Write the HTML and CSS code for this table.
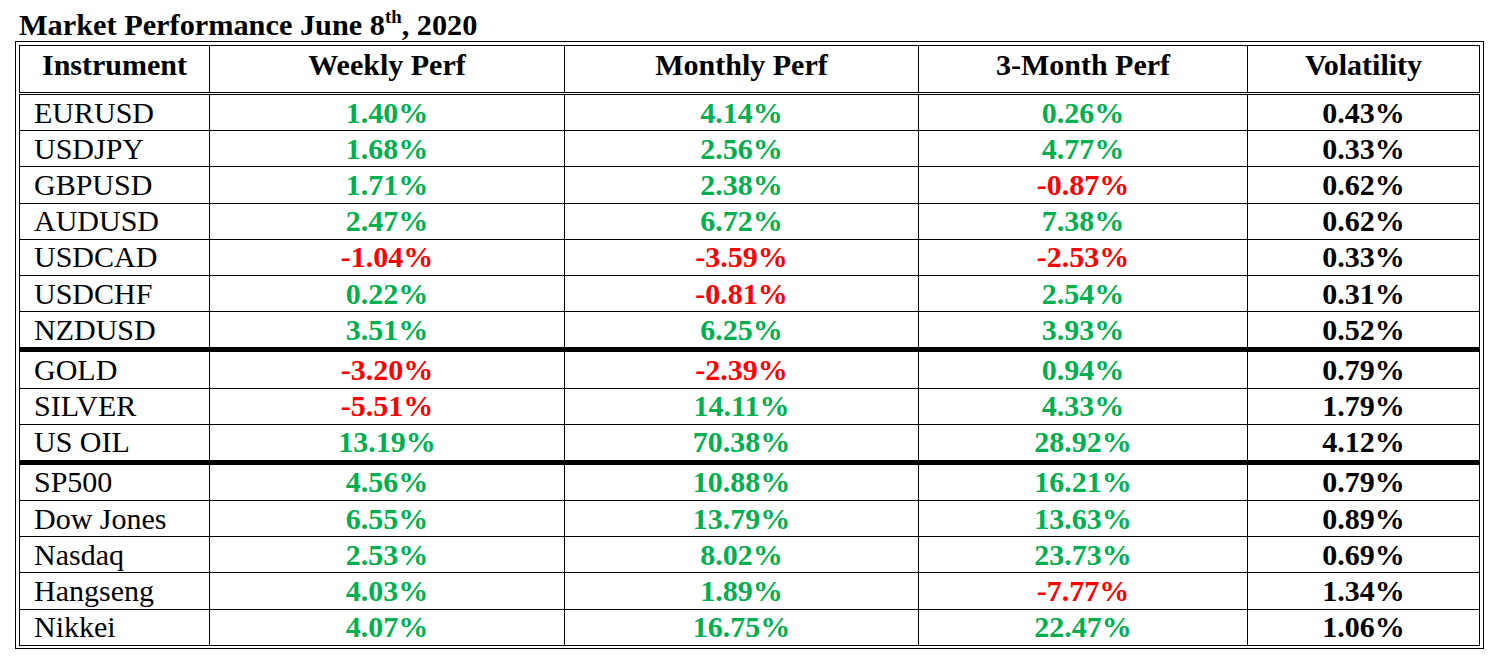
FILE: index.html
```html
<!DOCTYPE html>
<html>
<head>
<meta charset="utf-8">
<link rel="stylesheet" href="styles.css">
</head>
<body>
<h1 class="title">Market Performance June 8<sup class="ord">th</sup>, 2020</h1>
<div class="frame">
<table class="perf">
<colgroup>
<col class="c1"><col class="c2"><col class="c3"><col class="c4"><col class="c5">
</colgroup>
<thead>
<tr><th>Instrument</th><th>Weekly Perf</th><th>Monthly Perf</th><th>3-Month Perf</th><th>Volatility</th></tr>
</thead>
<tbody>
<tr><td class="name">EURUSD</td><td class="up">1.40%</td><td class="up">4.14%</td><td class="up">0.26%</td><td class="vol">0.43%</td></tr>
<tr><td class="name">USDJPY</td><td class="up">1.68%</td><td class="up">2.56%</td><td class="up">4.77%</td><td class="vol">0.33%</td></tr>
<tr><td class="name">GBPUSD</td><td class="up">1.71%</td><td class="up">2.38%</td><td class="down">-0.87%</td><td class="vol">0.62%</td></tr>
<tr><td class="name">AUDUSD</td><td class="up">2.47%</td><td class="up">6.72%</td><td class="up">7.38%</td><td class="vol">0.62%</td></tr>
<tr><td class="name">USDCAD</td><td class="down">-1.04%</td><td class="down">-3.59%</td><td class="down">-2.53%</td><td class="vol">0.33%</td></tr>
<tr><td class="name">USDCHF</td><td class="up">0.22%</td><td class="down">-0.81%</td><td class="up">2.54%</td><td class="vol">0.31%</td></tr>
<tr class="group-end"><td class="name">NZDUSD</td><td class="up">3.51%</td><td class="up">6.25%</td><td class="up">3.93%</td><td class="vol">0.52%</td></tr>
<tr><td class="name">GOLD</td><td class="down">-3.20%</td><td class="down">-2.39%</td><td class="up">0.94%</td><td class="vol">0.79%</td></tr>
<tr><td class="name">SILVER</td><td class="down">-5.51%</td><td class="up">14.11%</td><td class="up">4.33%</td><td class="vol">1.79%</td></tr>
<tr class="group-end"><td class="name">US OIL</td><td class="up">13.19%</td><td class="up">70.38%</td><td class="up">28.92%</td><td class="vol">4.12%</td></tr>
<tr><td class="name">SP500</td><td class="up">4.56%</td><td class="up">10.88%</td><td class="up">16.21%</td><td class="vol">0.79%</td></tr>
<tr><td class="name">Dow Jones</td><td class="up">6.55%</td><td class="up">13.79%</td><td class="up">13.63%</td><td class="vol">0.89%</td></tr>
<tr><td class="name">Nasdaq</td><td class="up">2.53%</td><td class="up">8.02%</td><td class="up">23.73%</td><td class="vol">0.69%</td></tr>
<tr><td class="name">Hangseng</td><td class="up">4.03%</td><td class="up">1.89%</td><td class="down">-7.77%</td><td class="vol">1.34%</td></tr>
<tr><td class="name">Nikkei</td><td class="up">4.07%</td><td class="up">16.75%</td><td class="up">22.47%</td><td class="vol">1.06%</td></tr>
</tbody>
</table>
</div>
</body>
</html>
```
FILE: styles.css
```css
html, body {
  margin: 0;
  padding: 0;
  background: #ffffff;
}
body {
  font-family: "Liberation Serif", "Times New Roman", serif;
  color: #000000;
}
.title {
  margin: 0;
  padding: 9px 0 0 19px;
  height: 32px;
  font-size: 30.3px;
  line-height: 32px;
  font-weight: bold;
}
.ord {
  font-size: 0.62em;
  line-height: 0;
  vertical-align: 0.62em;
}
.frame {
  margin-left: 15px;
  width: 1469px;
  box-sizing: border-box;
  border: 1px solid #000;
  padding: 3px 2px 2px 3px;
}
.perf {
  width: 1461px;
  table-layout: fixed;
  border-collapse: collapse;
  border: 1px solid #000;
  font-size: 30px;
}
.c1 { width: 190px; }
.c2 { width: 355px; }
.c3 { width: 354px; }
.c4 { width: 329px; }
.c5 { width: 232px; }
.perf th {
  height: 44px;
  padding: 2px 0 0 0;
  vertical-align: top;
  text-align: center;
  font-weight: bold;
  line-height: normal;
  border: 1px solid #000;
  border-bottom: 3px double #000;
}
.perf td {
  height: 35.2px;
  padding: 0;
  text-align: center;
  vertical-align: middle;
  font-weight: bold;
  line-height: normal;
  border: 1px solid #000;
  white-space: nowrap;
}
.perf td.name {
  text-align: left;
  padding-left: 14px;
  font-weight: normal;
}
.perf td.up { color: #00b050; }
.perf td.down { color: #ff0000; }
.perf td.vol { color: #000000; }
.perf tr.group-end td {
  border-bottom: 5px solid #000;
}
```
